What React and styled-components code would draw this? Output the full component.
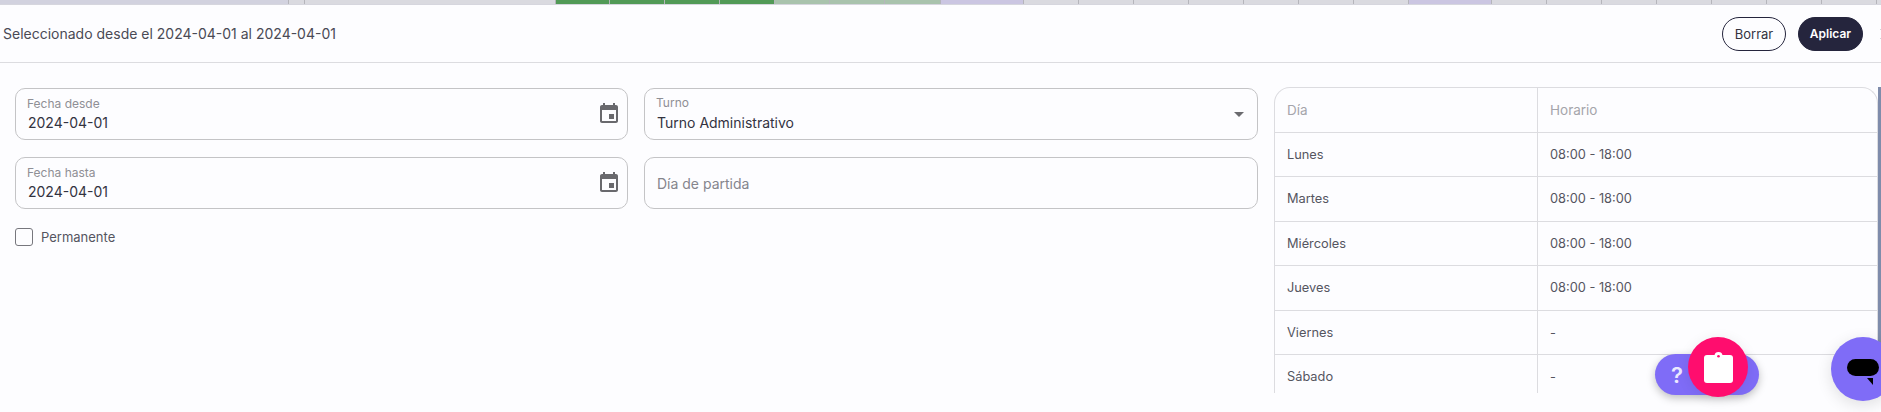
import React from 'react'
import styled, { createGlobalStyle } from 'styled-components'

const GlobalStyle = createGlobalStyle`
  html, body {
    margin: 0;
    height: 100%;
    overflow: hidden;
    background: #fdfdff;
    font-family: Inter, "Liberation Sans", sans-serif;
    color: #33333f;
  }
`

const Page = styled.div`
  position: relative;
  width: 1881px;
  height: 412px;
  overflow: hidden;
`

const Strip = styled.div`
  display: flex;
  height: 4px;
  border-bottom: 1px solid #d6d6de;
`

const StripCell = styled.div`
  flex: none;
  box-sizing: border-box;
  border-right: 1px solid #b5b5bb;
  width: ${p => p.$w}px;
  background: ${p => p.$c};
`

const Header = styled.div`
  display: flex;
  align-items: center;
  justify-content: space-between;
  height: 58px;
  padding-left: 3px;
  box-sizing: border-box;
  border-bottom: 1px solid #dcdce0;
  font-size: 14px;
  color: #4a4a55;
`

const Actions = styled.div`
  display: flex;
  align-items: center;
  gap: 12px;
  margin-right: -11px;
`

const Pill = styled.button`
  height: 34px;
  width: ${p => (p.$dark ? 65 : 64)}px;
  box-sizing: border-box;
  border-radius: 17px;
  border: 1px solid #25253d;
  background: ${p => (p.$dark ? '#25253d' : 'transparent')};
  color: ${p => (p.$dark ? '#fff' : '#33333f')};
  font: ${p => (p.$dark ? '600 12px' : '400 13px')} Inter, sans-serif;
  padding: 0;
`

const CloseMark = styled.svg`
  width: 12px;
  height: 12px;
  margin-left: 5px;
  stroke: #44444f;
  stroke-width: 1.4;
`

const Body = styled.div`
  display: grid;
  grid-template-columns: 1243px 1fr;
  column-gap: 16px;
  padding: 24px 3px 0 15px;
  height: 306px;
  overflow: hidden;
`

const Form = styled.div`
  display: grid;
  grid-template-columns: 613px 614px;
  grid-auto-rows: 52px;
  column-gap: 16px;
  row-gap: 17px;
  align-content: start;
  margin-top: 1px;
`

const Field = styled.div`
  display: flex;
  align-items: center;
  justify-content: space-between;
  box-sizing: border-box;
  border: 1px solid #c4c4c6;
  border-radius: 10px;
  padding: 0 6px 0 11px;
`

const FieldText = styled.div`
  display: flex;
  flex-direction: column;
`

const FieldLabel = styled.span`
  font-size: 12px;
  line-height: 15px;
  color: #8f8f95;
`

const FieldValue = styled.span`
  font-size: 14px;
  line-height: 20px;
  margin: ${p => (p.$select ? 3 : 2)}px 0 0 1px;
  color: #33333f;
`

const Placeholder = styled.span`
  font-size: 14px;
  margin-left: 1px;
  color: #85858d;
`

const CheckRow = styled.label`
  display: flex;
  align-items: center;
  gap: 8px;
  font-size: 13px;
  color: #55555f;
  height: 20px;
  margin-top: 1px;
`

const CheckBox = styled.span`
  width: 18px;
  height: 18px;
  box-sizing: border-box;
  border: 1px solid #77777d;
  border-radius: 3px;
`

const Table = styled.div`
  display: grid;
  grid-template-columns: 262px 1fr;
  grid-auto-rows: 44.5px;
  box-sizing: border-box;
  height: 306px;
  border: 1px solid #dcdce0;
  border-bottom: 0;
  border-top-left-radius: 16px;
  border-top-right-radius: 16px;
  overflow: hidden;
`

const Cell = styled.div`
  display: flex;
  align-items: center;
  box-sizing: border-box;
  padding-left: 12px;
  font-size: ${p => (p.$head ? 13.5 : 12.8)}px;
  border-bottom: 1px solid #dcdce0;
  border-left: ${p => (p.$second ? '1px solid #dcdce0' : '0')};
  color: ${p => (p.$head ? '#a5a5ab' : '#55555f')};
`

const Scroll = styled.div`
  position: absolute;
  right: 0;
  top: 87px;
  width: 3px;
  height: 258px;
  background: #7f8cab;
`

const HelpPill = styled.div`
  position: absolute;
  left: 1655px;
  top: 354px;
  width: 104px;
  height: 41px;
  border-radius: 21px;
  background: #7f6cf7;
  color: #ece9ff;
  font-size: 22px;
  font-weight: 600;
  display: flex;
  align-items: center;
  padding-left: 16px;
  box-sizing: border-box;
  box-shadow: 0 3px 8px rgba(0, 0, 0, 0.25);
`

const PinkButton = styled.div`
  position: absolute;
  left: 1688px;
  top: 337px;
  width: 60px;
  height: 60px;
  border-radius: 50%;
  background: #ff0d6e;
  display: flex;
  align-items: center;
  justify-content: center;
  box-shadow: 0 2px 14px rgba(0, 0, 0, 0.08);
`

const ChatButton = styled.div`
  position: absolute;
  left: 1831px;
  top: 337px;
  width: 64px;
  height: 64px;
  border-radius: 50%;
  background: #7f6cf7;
  box-shadow: 0 4px 16px rgba(0, 0, 0, 0.12);
`

const ChatBubble = styled.div`
  position: absolute;
  left: 16px;
  top: 22px;
  width: 32px;
  height: 17px;
  border-radius: 8.5px;
  background: #000;
  &::after {
    content: '';
    position: absolute;
    left: 20px;
    top: 19px;
    border-style: solid;
    border-width: 0 6px 7px 0;
    border-color: transparent #000 transparent transparent;
  }
`

const CalendarIcon = () => (
  <svg width="24" height="24" viewBox="0 0 24 24" fill="#69696d">
    <path d="M17 12h-5v5h5v-5zM16 1v2H8V1H6v2H5c-1.110 0-1.990.9-1.990 2L3 19c0 1.100.89 2 2 2h14c1.100 0 2-.9 2-2V5c0-1.100-.9-2-2-2h-1V1h-2zm3 18H5V8h14v11z" />
  </svg>
)

const Caret = () => (
  <svg width="10" height="5" viewBox="0 0 10 5" fill="#6b6b6f" style={{ marginRight: 7, marginTop: 1 }}>
    <path d="M0 0h10L5 5z" />
  </svg>
)

const ClipboardIcon = () => (
  <svg width="29" height="31" viewBox="0 0 29 31" fill="#fff">
    <rect x="0" y="3" width="29" height="28" rx="3" />
    <circle cx="14.500" cy="4" r="4" />
    <circle cx="14.500" cy="4.200" r="1.300" fill="#ff0d6e" />
  </svg>
)

const grey = '#dadae0'
const purple = '#cbc6e2'
const green = '#529a57'
const paleGreen = '#a9c3ad'

const cells = [
  { w: 289, c: '#d2d2df' },
  { w: 16, c: grey },
  { w: 251, c: grey },
  { w: 54, c: green }, { w: 55, c: green }, { w: 55, c: green }, { w: 55, c: green },
  { w: 55, c: paleGreen }, { w: 55, c: paleGreen }, { w: 56, c: paleGreen },
  { w: 83, c: purple },
  ...Array(7).fill({ w: 55, c: grey }),
  { w: 83, c: purple },
  ...Array(7).fill({ w: 55, c: grey }),
  { w: 55, c: grey },
]

const rows = [
  ['Lunes', '08:00 - 18:00'],
  ['Martes', '08:00 - 18:00'],
  ['Miércoles', '08:00 - 18:00'],
  ['Jueves', '08:00 - 18:00'],
  ['Viernes', '-'],
  ['Sábado', '-'],
]

export default function App() {
  return (
    <Page>
      <GlobalStyle />
      <Strip>
        {cells.map((s, i) => (
          <StripCell key={i} $w={s.w} $c={s.c} />
        ))}
      </Strip>
      <Header>
        <span>Seleccionado desde el 2024-04-01 al 2024-04-01</span>
        <Actions>
          <Pill>Borrar</Pill>
          <Pill $dark>Aplicar</Pill>
          <CloseMark viewBox="0 0 12 12">
            <path d="M1 1l10 10M11 1L1 11" />
          </CloseMark>
        </Actions>
      </Header>
      <Body>
        <Form>
          <Field>
            <FieldText>
              <FieldLabel>Fecha desde</FieldLabel>
              <FieldValue>2024-04-01</FieldValue>
            </FieldText>
            <CalendarIcon />
          </Field>
          <Field>
            <FieldText>
              <FieldLabel>Turno</FieldLabel>
              <FieldValue $select>Turno Administrativo</FieldValue>
            </FieldText>
            <Caret />
          </Field>
          <Field>
            <FieldText>
              <FieldLabel>Fecha hasta</FieldLabel>
              <FieldValue>2024-04-01</FieldValue>
            </FieldText>
            <CalendarIcon />
          </Field>
          <Field>
            <Placeholder>Día de partida</Placeholder>
          </Field>
          <CheckRow>
            <CheckBox />
            Permanente
          </CheckRow>
        </Form>
        <Table>
          <Cell $head>Día</Cell>
          <Cell $head $second>Horario</Cell>
          {rows.map(([day, hours]) => (
            <React.Fragment key={day}>
              <Cell>{day}</Cell>
              <Cell $second>{hours}</Cell>
            </React.Fragment>
          ))}
        </Table>
      </Body>
      <Scroll />
      <HelpPill>?</HelpPill>
      <PinkButton>
        <ClipboardIcon />
      </PinkButton>
      <ChatButton>
        <ChatBubble />
      </ChatButton>
    </Page>
  )
}
